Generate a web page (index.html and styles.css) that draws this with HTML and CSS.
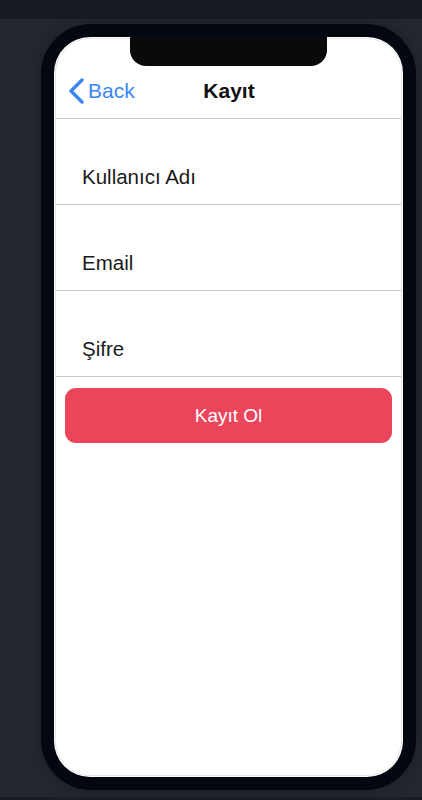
FILE: index.html
```html
<!DOCTYPE html>
<html lang="tr">
<head>
<meta charset="utf-8">
<title>Kayıt</title>
<link rel="stylesheet" href="styles.css">
</head>
<body>
<div class="topbar"></div>
<main class="stage">
  <div class="phone">
    <div class="screen">
      <div class="notch"></div>
      <header class="nav">
        <a class="back" href="#">
          <svg class="chev" width="16" height="26" viewBox="0 0 16 26"><path d="M14 2 L3 13 L14 24" fill="none" stroke="#3b86f7" stroke-width="3.4" stroke-linecap="round" stroke-linejoin="round"/></svg>
          <span>Back</span>
        </a>
        <h1 class="title">Kayıt</h1>
      </header>
      <div class="field">Kullanıcı Adı</div>
      <div class="field">Email</div>
      <div class="field">Şifre</div>
      <button class="submit">Kayıt Ol</button>
    </div>
  </div>
</main>
<div class="bottombar"></div>
</body>
</html>
```
FILE: styles.css
```css
html, body {
  margin: 0;
  padding: 0;
}
body {
  background: #23272f;
  font-family: "Liberation Sans", Arial, sans-serif;
  width: 422px;
  height: 800px;
  overflow: hidden;
  display: flex;
  flex-direction: column;
}
.topbar {
  height: 19px;
  background: #181b22;
  flex: none;
}
.stage {
  flex: 1;
  padding: 5px 0 0 41px;
}
.bottombar {
  height: 3px;
  background: #1a1d24;
  flex: none;
}
.phone {
  width: 349px;
  height: 740px;
  padding: 13px;
  background: #030810;
  border-radius: 50px;
  box-shadow: 0 0 18px rgba(0, 0, 0, 0.25);
}
.screen {
  position: relative;
  width: 349px;
  height: 740px;
  background: #fff;
  border-radius: 36px;
  overflow: hidden;
  display: flex;
  flex-direction: column;
}
.screen::after {
  content: "";
  position: absolute;
  inset: 1px;
  border: 1px solid #e6e6e6;
  border-radius: 35px;
  pointer-events: none;
}
.notch {
  position: absolute;
  top: 0;
  left: 76px;
  width: 197px;
  height: 29px;
  background: #0a0a0c;
  border-radius: 0 0 16px 16px;
  z-index: 2;
}
.nav {
  position: relative;
  height: 52px;
  margin: 29px 2px 0;
  border-bottom: 1px solid #cbcbcb;
  display: flex;
  align-items: center;
  justify-content: center;
  flex: none;
}
.back {
  position: absolute;
  left: 12px;
  top: 12px;
  display: flex;
  align-items: center;
  gap: 4px;
  color: #3b86f7;
  text-decoration: none;
  font-size: 21px;
}
.chev {
  display: block;
}
.title {
  margin: 0 0 2px;
  font-size: 21px;
  font-weight: bold;
  color: #111;
  padding-left: 1px;
}
.field {
  margin: 0 2px;
  border-bottom: 1px solid #cbcbcb;
  display: flex;
  align-items: flex-end;
  box-sizing: border-box;
  padding: 0 0 15px 26px;
  height: 86px;
  font-size: 20.5px;
  color: #1a1a1a;
  flex: none;
}
.submit {
  margin: 11px 11px 0;
  height: 55px;
  border: none;
  border-radius: 11px;
  background: #eb455c;
  color: #fff;
  font-family: "Liberation Sans", Arial, sans-serif;
  font-size: 19px;
  flex: none;
}
```
